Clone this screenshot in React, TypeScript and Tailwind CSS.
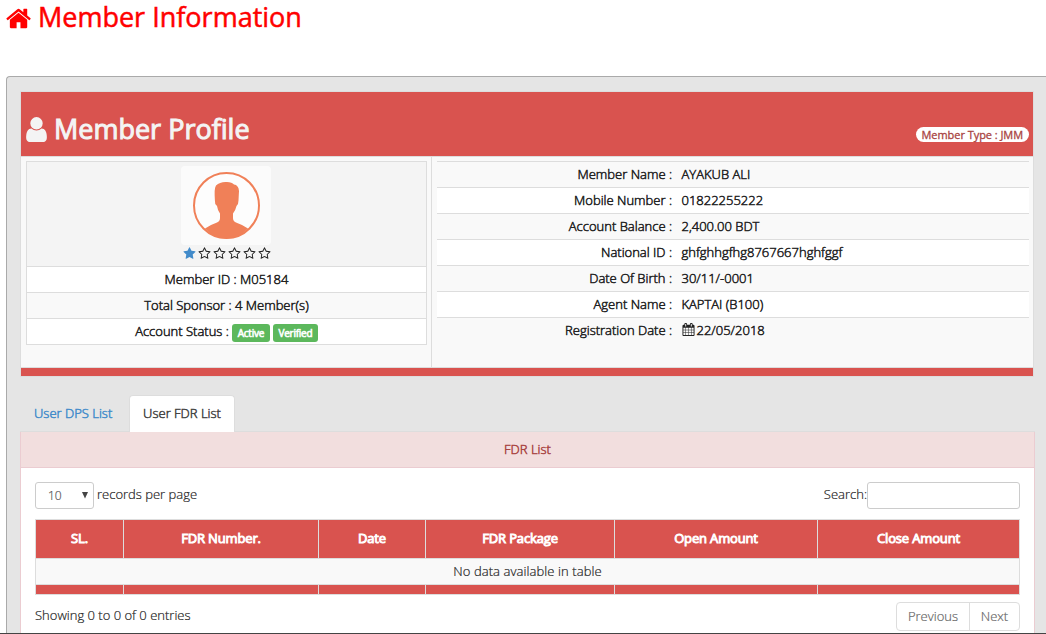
import React from "react";

const HOME =
  "M1408 992v480q0 26-19 45t-45 19h-384v-384h-256v384h-384q-26 0-45-19t-19-45v-480q0-1 .5-3t.5-3l575-474 575 474q1 2 1 6zm223-69l-62 74q-8 9-21 11h-3q-13 0-21-7l-692-577-692 577q-12 8-24 7-13-2-21-11l-62-74q-8-10-7-23.5t11-21.5l719-599q32-26 76-26t76 26l244 204v-195q0-14 9-23t23-9h192q14 0 23 9t9 23v408l219 182q10 8 11 21.5t-7 23.5z";
const USER =
  "M1536 1399q0 109-62.5 187t-150.5 78h-854q-88 0-150.5-78t-62.5-187q0-85 8.5-160.5t31.5-152 58.5-131 94-89 134.5-34.5q131 128 313 128t313-128q76 0 134.5 34.5t94 89 58.5 131 31.5 152 8.5 160.5zm-256-887q0 159-112.5 271.5t-271.5 112.5-271.5-112.5-112.5-271.5 112.5-271.5 271.5-112.5 271.5 112.5 112.5 271.5z";
const STAR =
  "M1728 647q0 22-26 48l-363 354 86 500q1 7 1 20 0 21-10.5 35.5t-30.5 14.5q-19 0-40-12l-449-236-449 236q-22 12-40 12-21 0-31.5-14.5t-10.5-35.5q0-6 2-20l86-500-364-354q-25-27-25-48 0-37 56-46l502-73 225-455q19-41 49-41t49 41l225 455 502 73q56 9 56 46z";
const STAR_O =
  "M1201 1004l306-297-422-62-189-382-189 382-422 62 306 297-73 421 378-199 377 199zm527-357q0 22-26 48l-363 354 86 500q1 7 1 20 0 50-41 50-19 0-40-12l-449-236-449 236q-22 12-40 12-21 0-31.5-14.5t-10.5-35.5q0-6 2-20l86-500-364-354q-25-27-25-48 0-37 56-46l502-73 225-455q19-41 49-41t49 41l225 455 502 73q56 9 56 46z";
const CALENDAR =
  "M192 1664h288v-288h-288v288zm352 0h320v-288h-320v288zm-352-352h288v-320h-288v320zm352 0h320v-320h-320v320zm-352-384h288v-288h-288v288zm736 736h320v-288h-320v288zm-384-736h320v-288h-320v288zm768 736h288v-288h-288v288zm-384-352h320v-320h-320v320zm-352-864v-288q0-13-9.5-22.5t-22.5-9.5h-64q-13 0-22.5 9.5t-9.5 22.5v288q0 13 9.5 22.5t22.5 9.5h64q13 0 22.5-9.5t9.5-22.5zm736 864h288v-320h-288v320zm-384-384h320v-288h-320v288zm384 0h288v-288h-288v288zm32-480v-288q0-13-9.5-22.5t-22.5-9.5h-64q-13 0-22.5 9.5t-9.5 22.5v288q0 13 9.5 22.5t22.5 9.5h64q13 0 22.5-9.5t9.5-22.5zm384-64v1280q0 52-38 90t-90 38h-1408q-52 0-90-38t-38-90v-1280q0-52 38-90t90-38h128v-96q0-66 47-113t113-47h64q66 0 113 47t47 113v96h384v-96q0-66 47-113t113-47h64q66 0 113 47t47 113v96h128q52 0 90 38t38 90z";

function Icon({ d, className }: { d: string; className: string }) {
  return (
    <svg viewBox="0 0 1792 1792" className={className} fill="currentColor" aria-hidden="true">
      <path d={d} />
    </svg>
  );
}

function Avatar() {
  return (
    <div className="mr-0.5 h-[79px] w-[90px] rounded bg-[#fbfbfb]">
      <svg viewBox="0 0 90 79" className="block h-[79px] w-[90px]" aria-hidden="true">
        <circle cx="45.5" cy="39.5" r="32.5" fill="#fdfdfd" stroke="#f08058" strokeWidth="2" />
        <path
          d="M24 62.500 Q30 58.500 36 56.500 Q39 55 39 52 L39 47.500 Q36.500 44 36 40 Q33.500 38 33.900 34.500 Q33 22 35 19.500 Q39 15.500 46 16 Q51 16 53 18.500 Q57.500 19 58 25 L57.500 34.500 Q57.500 38.500 55.500 40 Q54.500 44.500 52 47.500 L52 52 Q52 55 55 56.500 Q61 58.500 67 62.500 Q58.500 72.500 45.500 72.500 Q32.500 72.500 24 62.500Z"
          fill="#f08058"
        />
      </svg>
    </div>
  );
}

const details = [
  ["Member Name :", "AYAKUB ALI"],
  ["Mobile Number :", "01822255222"],
  ["Account Balance :", "2,400.00 BDT"],
  ["National ID :", "ghfghhgfhg8767667hghfggf"],
  ["Date Of Birth :", "30/11/-0001"],
  ["Agent Name :", "KAPTAI (B100)"],
  ["Registration Date :", "22/05/2018"],
];

const columns = ["SL.", "FDR Number.", "Date", "FDR Package", "Open Amount", "Close Amount"];
const grid = "grid grid-cols-[87px_194px_106px_188px_202px_201px] gap-x-px";

function Profile() {
  return (
    <section className="mr-3.5 border border-[#ddd] bg-[#f9f9f9] text-[#222]">
      <header className="flex h-[65px] items-start justify-between border-b border-[#ddd] bg-[#d9534f] pr-1 pl-px font-normal text-[#f4f4f4]">
        <h2 className="flex pt-[18px] text-[27px] leading-[38px] font-normal whitespace-nowrap [-webkit-text-stroke:1px]">
          <Icon d={USER} className="mt-[5px] mr-[3px] h-[29px] w-[29px] [-webkit-text-stroke:0]" />
          Member Profile
        </h2>
        <span className="mt-[35px] flex h-[15px] items-center rounded-full bg-white px-1.5 text-[11px] leading-[15px] tracking-[-0.05px] text-[#a94442] [-webkit-text-stroke:0.3px]">
          Member Type : JMM
        </span>
      </header>
      <div className="flex h-[210px]">
        <div className="w-[411px] border-r border-[#ddd] pt-1 pr-1 pl-[5px]">
          <div className="border border-[#ddd] text-center text-[13px] leading-[25px] font-light [-webkit-text-stroke:0.5px]">
            <div className="flex h-[104px] flex-col items-center bg-[#f4f4f4] pt-1">
              <Avatar />
              <div className="mt-0.5 flex gap-0.5 [-webkit-text-stroke:0]">
                <Icon d={STAR} className="h-[13px] w-[13px] text-[#428bca]" />
                {[1, 2, 3, 4, 5].map((n) => (
                  <Icon key={n} d={STAR_O} className="h-[13px] w-[13px]" />
                ))}
              </div>
            </div>
            <div className="h-[26px] border-t border-[#ddd] bg-white">Member ID : M05184</div>
            <div className="h-[26px] border-t border-[#ddd]">Total Sponsor : 4 Member(s)</div>
            <div className="flex h-[26px] justify-center border-t border-[#ddd] bg-white">
              Account Status :
              <span className="mt-[5px] ml-[3px] h-[18px] w-[38px] rounded-[3px] bg-[#5cb85c] text-[10px] leading-[18px] font-normal tracking-[-0.25px] text-white [-webkit-text-stroke:0.6px]">
                Active
              </span>
              <span className="mt-[5px] ml-[3px] h-[18px] w-[45px] rounded-[3px] bg-[#5cb85c] text-[10px] leading-[18px] font-normal tracking-[-0.25px] text-white [-webkit-text-stroke:0.6px]">
                Verified
              </span>
            </div>
          </div>
        </div>
        <dl className="flex-1 pt-1 pr-1 pl-[5px] text-[13px] leading-[25px] font-light [-webkit-text-stroke:0.5px]">
          {details.map(([label, value], i) => (
            <div
              key={label}
              className="grid h-[26px] grid-cols-[235px_1fr] gap-x-[9.5px] border-t border-[#ddd] odd:bg-[#f9f9f9] even:bg-white"
            >
              <dt className="text-right">{label}</dt>
              <dd className="flex">
                {i === 6 && (
                  <Icon d={CALENDAR} className="mt-[5px] mr-0.5 h-[13px] w-[13px] [-webkit-text-stroke:0]" />
                )}
                {value}
              </dd>
            </div>
          ))}
        </dl>
      </div>
      <footer className="h-[9px] border-t border-[#ddd] bg-[#d9534f]" />
    </section>
  );
}

function FdrPanel() {
  return (
    <section className="mr-[13px] h-[240px] border-x border-[#ebccd1] bg-white">
      <h3 className="h-9 border-b border-[#ebccd1] bg-[#f2dede] text-center text-[13px] leading-[35px] font-light text-[#a94442] [-webkit-text-stroke:0.5px]">
        FDR List
      </h3>
      <div className="px-3.5 pt-3.5 [-webkit-text-stroke:0.2px]">
        <div className="flex justify-between leading-[25px]">
          <label className="flex">
            <span className="mr-[3px] flex h-[27px] w-[59px] items-center justify-between rounded-[3px] border border-[#ccc] pr-1 pl-3 text-xs text-[#555]">
              10
              <svg viewBox="0 0 8 8" className="mb-0.5 h-2 w-2" aria-hidden="true">
                <path d="M1 1H7L4 7.500Z" fill="#444" />
              </svg>
            </span>
            records per page
          </label>
          <label className="flex">
            Search:
            <input className="h-[27px] w-[153px] rounded-[3px] border border-[#ccc] bg-white px-2 outline-none" />
          </label>
        </div>
        <div className="mt-2.5 border border-[#ddd] bg-[#ddd]">
          <div className={grid}>
            {columns.map((c) => (
              <div
                key={c}
                className="h-[38px] bg-[#d9534f] text-center leading-[37px] font-normal tracking-[-0.15px] text-white [-webkit-text-stroke:0.9px]"
              >
                {c}
              </div>
            ))}
          </div>
          <div className="my-px h-[25px] bg-[#f9f9f9] text-center leading-[25px] tracking-[0.08px]">
            No data available in table
          </div>
          <div className={grid}>
            {columns.map((c) => (
              <div key={c} className="h-[9px] bg-[#d9534f]" />
            ))}
          </div>
        </div>
        <div className="flex justify-between">
          <p className="pt-2 leading-[25px]">Showing 0 to 0 of 0 entries</p>
          <div className="mt-[7px] flex h-[29px] rounded border border-[#ddd] leading-[27px] text-[#666]">
            <span className="w-[73px] border-r border-[#ddd] text-center">Previous</span>
            <span className="w-[49px] text-center">Next</span>
          </div>
        </div>
      </div>
    </section>
  );
}

export default function App() {
  return (
    <main className="flex h-[634px] w-full flex-col overflow-hidden bg-white font-['Open_Sans',sans-serif] text-[13px] font-light text-[#222]">
      <h1 className="flex h-[76px] shrink-0 pl-1.5 text-[27px] leading-[34px] font-normal whitespace-nowrap text-[#f00] [-webkit-text-stroke:0.5px]">
        <Icon d={HOME} className="mt-[5px] mr-[5px] h-[27px] w-[27px] [-webkit-text-stroke:0]" />
        Member Information
      </h1>
      <div className="-mr-1 ml-1.5 h-[557px] shrink-0 overflow-hidden rounded-tl border-t border-l border-[#aaa] bg-[#e5e5e5] pt-3.5 pr-0.5 pl-[13px]">
        <Profile />
        <nav className="mt-[18px] mr-[13px] flex h-[37px] border-b border-[#ddd] leading-[36px] [-webkit-text-stroke:0.5px]">
          <a className="w-[109px] pl-3.5 text-[#428bca]">User DPS List</a>
          <a className="-mb-px w-[106px] rounded-t border border-b-0 border-[#ddd] bg-white text-center leading-[35px] text-[#444]">
            User FDR List
          </a>
        </nav>
        <FdrPanel />
      </div>
      <div className="h-px shrink-0 bg-[#444]" />
    </main>
  );
}
